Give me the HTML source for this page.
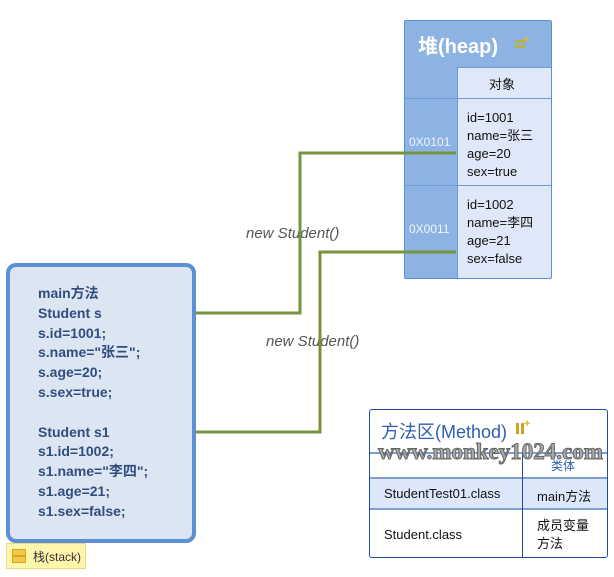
<!DOCTYPE html>
<html><head><meta charset="utf-8"><style>
body{margin:0;width:614px;height:577px;background:#fff;position:relative;overflow:hidden;font-family:"Liberation Sans","Noto Sans CJK SC",sans-serif}
.a{position:absolute}
.stack{left:6px;top:263px;width:182px;height:272px;border:4px solid #5b8fd6;border-radius:10px;background:#dce6f2}
.st{left:38px;top:284px;font-weight:bold;font-size:14px;line-height:19.8px;color:#2f4d7e;white-space:pre}
.heap{left:404px;top:20px;width:146px;height:257px;border:1px solid #5b8fd6;border-radius:2px;background:#dfe8f8;overflow:hidden}
.cell{position:absolute;font-size:13px;color:#111;line-height:18px}
.h{font-size:13px;color:#111}
</style></head><body>
<div class="a stack"></div>
<div class="a st">main方法
Student s
s.id=1001;
s.name="张三";
s.age=20;
s.sex=true;

Student s1
s1.id=1002;
s1.name="李四";
s1.age=21;
s1.sex=false;</div>
<div class="a" style="left:6px;top:543px;width:78px;height:24px;background:#fff6ae;border:1px solid #eadb7a"></div>
<div class="a" style="left:12px;top:549px;width:12px;height:5px;background:#f5c84a;border:1px solid #d9a520"></div>
<div class="a" style="left:12px;top:556px;width:12px;height:5px;background:#f5c84a;border:1px solid #d9a520"></div>
<div class="a" style="left:33px;top:548px;font-size:12px;color:#333">栈(stack)</div>
<div class="a" style="left:246px;top:225px;font-style:italic;font-size:15px;color:#555">new Student()</div>
<div class="a" style="left:266px;top:333px;font-style:italic;font-size:15px;color:#555">new Student()</div>

<div class="a heap">
<div class="a" style="left:0;top:0;width:146px;height:46px;background:#8db3e2;border-bottom:1px solid #6f9ad6"></div>
<div class="a" style="left:13px;top:9px;font-size:20px;font-weight:bold;color:#fff">堆(heap)</div>
<div class="a" style="left:110px;top:19px;width:10px;height:3px;background:#b6b34a"></div>
<div class="a" style="left:110px;top:24px;width:10px;height:3px;background:#b6b34a"></div>
<div class="a" style="left:118px;top:13px;font-size:11px;font-weight:bold;color:#e9b428">+</div>
<div class="a" style="left:0;top:46px;width:52px;height:211px;background:#8db3e2;border-right:1px solid #6f9ad6"></div>
<div class="a" style="left:0;top:77px;width:146px;height:1px;background:#6f9ad6"></div>
<div class="a" style="left:0;top:164px;width:146px;height:1px;background:#6f9ad6"></div>
<div class="a h" style="left:84px;top:53px">对象</div>
<div class="a" style="left:4px;top:114px;font-size:12px;color:#f2f6fc">0X0101</div>
<div class="a" style="left:4px;top:201px;font-size:12px;color:#f2f6fc">0X0011</div>
<div class="cell" style="left:62px;top:88px">id=1001<br>name=张三<br>age=20<br>sex=true</div>
<div class="cell" style="left:62px;top:175px">id=1002<br>name=李四<br>age=21<br>sex=false</div>
</div>
<svg class="a" style="left:0;top:0" width="614" height="577">
<polyline points="196,313 300,313 300,153 456,153" fill="none" stroke="#77933c" stroke-width="3"/>
<polyline points="196,432 320,432 320,252 456,252" fill="none" stroke="#77933c" stroke-width="3"/>
</svg>

<div class="a" style="left:369px;top:409px;width:237px;height:147px;border:1px solid #1f4e9c;border-radius:3px;overflow:hidden">
<div class="a" style="left:11px;top:8px;font-size:18px;color:#2f5fb0">方法区(Method)</div>
<div class="a" style="left:146px;top:13px;width:3px;height:11px;background:#c9a428"></div>
<div class="a" style="left:151px;top:13px;width:3px;height:11px;background:#c9a428"></div>
<div class="a" style="left:154px;top:8px;font-size:11px;font-weight:bold;color:#e9b428">+</div>
<div class="a" style="left:0;top:42px;width:237px;height:2px;background:#7f9fcf"></div>
<div class="a" style="left:0;top:67px;width:237px;height:33px;background:#dde7fa;border-top:2px solid #7f9fcf;border-bottom:2px solid #7f9fcf;box-sizing:border-box"></div>
<div class="a" style="left:152px;top:43px;width:1px;height:110px;background:#1f4e9c"></div>
<div class="a" style="left:181px;top:47px;font-size:12px;color:#2f5fb0">类体</div>
<div class="a h" style="left:14px;top:76px">StudentTest01.class</div>
<div class="a h" style="left:167px;top:76px">main方法</div>
<div class="a h" style="left:14px;top:117px">Student.class</div>
<div class="a h" style="left:167px;top:107px;line-height:18px">成员变量<br>方法</div>
<div class="a" style="left:8px;top:29px;font-family:'Liberation Serif',serif;font-weight:bold;font-size:23px;color:#aaa;-webkit-text-stroke:1px #666">www.monkey1024.com</div>
</div>
</body></html>
